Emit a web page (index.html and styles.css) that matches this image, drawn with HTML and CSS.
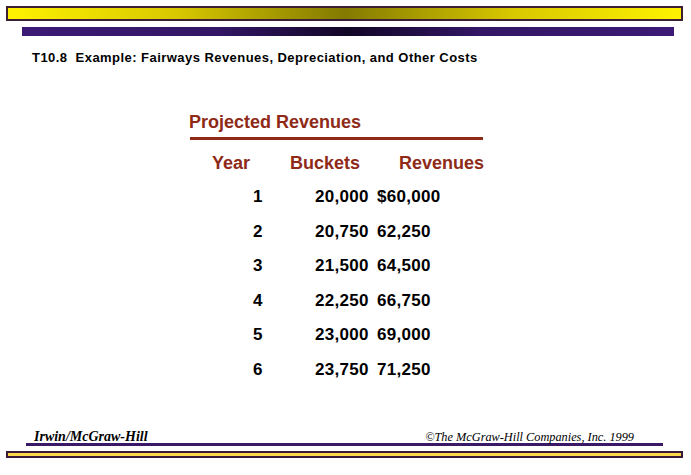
FILE: index.html
```html
<!DOCTYPE html>
<html>
<head>
<meta charset="utf-8">
<link rel="stylesheet" href="styles.css">
</head>
<body>
<div class="slide">
  <div class="topbar"></div>
  <div class="purplebar"></div>
  <div class="title">T10.8&nbsp; Example: Fairways Revenues, Depreciation, and Other Costs</div>
  <div class="heading">Projected Revenues</div>
  <div class="rule"></div>
  <div class="head-row">
    <span class="h-year">Year</span>
    <span class="h-buckets">Buckets</span>
    <span class="h-rev">Revenues</span>
  </div>
  <div class="rows">
    <div class="row"><span>1</span><span>20,000</span><span>$60,000</span></div>
    <div class="row"><span>2</span><span>20,750</span><span>62,250</span></div>
    <div class="row"><span>3</span><span>21,500</span><span>64,500</span></div>
    <div class="row"><span>4</span><span>22,250</span><span>66,750</span></div>
    <div class="row"><span>5</span><span>23,000</span><span>69,000</span></div>
    <div class="row"><span>6</span><span>23,750</span><span>71,250</span></div>
  </div>
  <div class="footer">
    <div class="foot-line">
      <span class="publisher">Irwin/McGraw-Hill</span>
      <span class="copyright">&copy;The McGraw-Hill Companies, Inc. 1999</span>
    </div>
    <div class="bottombar"></div>
  </div>
</div>
</body>
</html>
```

FILE: styles.css
```css
html, body {
  margin: 0;
  padding: 0;
  background: #ffffff;
}
.slide {
  width: 691px;
  height: 475px;
  display: flex;
  flex-direction: column;
  font-family: "Liberation Sans", Arial, sans-serif;
  overflow: hidden;
}
.topbar {
  margin: 6px 8px 0 6px;
  height: 15px;
  box-sizing: border-box;
  border: 2px solid #3d1f33;
  background: linear-gradient(to right, #fff200 0%, #d8c800 25%, #837a00 50%, #d8c800 75%, #fff200 100%);
}
.purplebar {
  margin: 6px 0 0 22px;
  width: 652px;
  height: 9px;
  background: linear-gradient(to right, #3c1a76 0%, #331665 30%, #120626 50%, #331665 70%, #3c1a76 100%);
}
.title {
  margin-top: 14px;
  padding-left: 32px;
  font-size: 13px;
  letter-spacing: 0.45px;
  line-height: 16px;
  font-weight: bold;
  color: #000;
}
.heading {
  margin-top: 45px;
  padding-left: 189px;
  font-size: 18px;
  line-height: 22px;
  font-weight: bold;
  color: #8e2a17;
}
.rule {
  margin: 4px 0 0 190px;
  width: 293px;
  height: 3px;
  background: #8e2a17;
}
.head-row {
  margin-top: 12px;
  display: flex;
  font-size: 18px;
  line-height: 22px;
  font-weight: bold;
  color: #8e2a17;
}
.h-year { margin-left: 212px; width: 78px; }
.h-buckets { width: 109px; }
.rows {
  margin-top: 6px;
}
.row {
  display: grid;
  grid-template-columns: 62px 62px auto;
  padding-left: 253px;
  height: 34.6px;
  line-height: 34.6px;
  font-size: 17px;
  letter-spacing: 0.3px;
  font-weight: bold;
  color: #000;
}
.footer {
  margin-top: auto;
  margin-bottom: 17px;
}
.foot-line {
  margin-left: 26px;
  width: 637px;
  box-sizing: border-box;
  padding: 0 29px 0 8px;
  display: flex;
  justify-content: space-between;
  align-items: flex-end;
  border-bottom: 3px solid #3a1a66;
  font-family: "Liberation Serif", "Times New Roman", serif;
  font-style: italic;
  line-height: 12px;
  height: 12px;
}
.publisher {
  font-size: 14px;
  font-weight: bold;
}
.copyright {
  font-size: 12.3px;
}
.bottombar {
  margin: 5px 8px 0 6px;
  height: 7px;
  box-sizing: border-box;
  border: 2px solid #3a1a3a;
  background: #fbd84a;
}
```
